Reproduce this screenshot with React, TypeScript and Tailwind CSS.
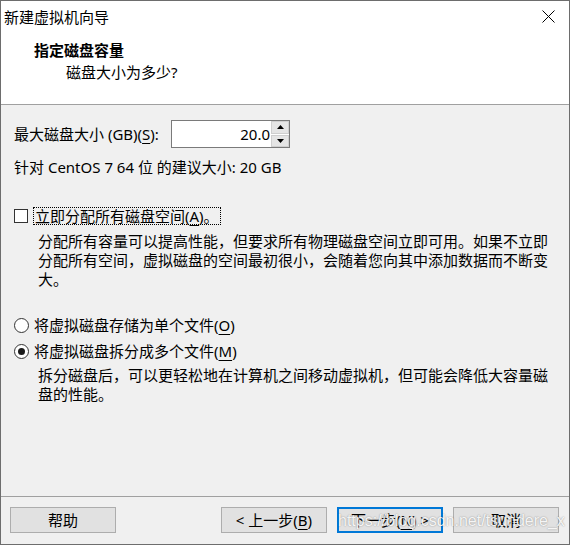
import React from "react";

function U({ children }: { children: React.ReactNode }) {
  return <span className="underline underline-offset-[3px] decoration-1">{children}</span>;
}

function Btn({ children, focused }: { children: React.ReactNode; focused?: boolean }) {
  return (
    <div
      className={
        focused
          ? "w-[106px] h-[26px] border-2 border-[#0078d7] bg-[#e1e1e1] flex items-center justify-center leading-[20px]"
          : "w-[106px] h-[26px] border border-[#adadad] bg-[#e1e1e1] flex items-center justify-center leading-[20px]"
      }
    >
      {children}
    </div>
  );
}

export default function App() {
  return (
    <div className="relative w-[570px] h-[545px] border border-[#6d6d6d] bg-[#f0f0f0] flex flex-col overflow-hidden text-black text-[15px] font-[family-name:'Noto_Sans','Noto_Sans_CJK_SC',sans-serif]">
      {/* header */}
      <div className="h-[104px] shrink-0 bg-white border-b border-[#a0a0a0] flex flex-col">
        <div className="h-[31px] flex items-center justify-between pl-[3px] pr-[14px]">
          <span className="leading-[20px]">新建虚拟机向导</span>
          <svg width="13" height="13" viewBox="0 0 13 13">
            <path d="M0.5 0.5L12.5 12.5M12.5 0.5L0.5 12.5" stroke="#000" strokeWidth="1" fill="none" />
          </svg>
        </div>
        <div className="pt-[8px] pl-[33px] font-bold leading-[20px]">指定磁盘容量</div>
        <div className="mt-[2px] pl-[65px] leading-[20px]">磁盘大小为多少?</div>
      </div>

      {/* body */}
      <div className="flex flex-col pl-[13px]">
        <div className="mt-[15px] h-[28px] flex items-center">
          <span className="w-[157px] leading-[20px] whitespace-nowrap">
            最大磁盘大小 (GB)(<U>S</U>):
          </span>
          <div className="w-[119px] h-[28px] border border-[#7a7a7a] bg-white flex">
            <div className="flex-1 text-right pr-[1px] leading-[26px]">20.0</div>
            <div className="w-[18px] flex flex-col gap-[1px]">
              <div className="flex-1 bg-[#e5e5e5] border border-[#cfcfcf] flex items-center justify-center">
                <svg width="7" height="4" viewBox="0 0 7 4">
                  <path d="M3.5 0L7 4H0z" fill="#000" />
                </svg>
              </div>
              <div className="flex-1 bg-[#e5e5e5] border border-[#cfcfcf] flex items-center justify-center">
                <svg width="7" height="4" viewBox="0 0 7 4">
                  <path d="M0 0H7L3.5 4z" fill="#000" />
                </svg>
              </div>
            </div>
          </div>
        </div>

        <div className="mt-[9px] leading-[20px]">针对 CentOS 7 64 位 的建议大小: 20 GB</div>

        <div className="mt-[30px] h-[18px] flex items-center">
          <div className="w-[14px] h-[14px] border border-[#333333] bg-white" />
          <span className="ml-[5px] border border-dotted border-black px-[1px] leading-[16px]">
            立即分配所有磁盘空间(<U>A</U>)。
          </span>
        </div>

        <div className="mt-[7px] ml-[24px] leading-[19px] whitespace-nowrap">
          分配所有容量可以提高性能，但要求所有物理磁盘空间立即可用。如果不立即
          <br />
          分配所有空间，虚拟磁盘的空间最初很小，会随着您向其中添加数据而不断变
          <br />
          大。
        </div>

        <div className="mt-[26px] h-[20px] flex items-center">
          <div className="w-[15px] h-[15px] rounded-full border border-[#333333] bg-white" />
          <span className="ml-[5px] leading-[20px]">
            将虚拟磁盘存储为单个文件(<U>O</U>)
          </span>
        </div>
        <div className="mt-[6px] h-[20px] flex items-center">
          <div className="w-[15px] h-[15px] rounded-full border border-[#333333] bg-white flex items-center justify-center">
            <div className="w-[7px] h-[7px] rounded-full bg-[#1a1a1a]" />
          </div>
          <span className="ml-[5px] leading-[20px]">
            将虚拟磁盘拆分成多个文件(<U>M</U>)
          </span>
        </div>

        <div className="mt-[5px] ml-[24px] leading-[19px] whitespace-nowrap">
          拆分磁盘后，可以更轻松地在计算机之间移动虚拟机，但可能会降低大容量磁
          <br />
          盘的性能。
        </div>
      </div>

      {/* footer */}
      <div className="mt-auto h-[48px] shrink-0 border-t border-[#a0a0a0] flex items-start pt-[10px] pl-[9px] pr-[10px]">
        <Btn>帮助</Btn>
        <div className="flex-1" />
        <div className="flex gap-[10px]">
          <Btn>
            &lt; 上一步(<U>B</U>)
          </Btn>
          <Btn focused>
            下一步(<U>N</U>) &gt;
          </Btn>
          <Btn>取消</Btn>
        </div>
      </div>

      {/* watermark */}
      <div className="absolute left-[337px] top-[510px] text-[16px] leading-[20px] text-white/90 [text-shadow:0_0_1.5px_rgba(0,0,0,0.45)] font-[family-name:'Liberation_Sans',sans-serif] whitespace-nowrap pointer-events-none">
        https://blog.csdn.net/tsundere_x
      </div>
    </div>
  );
}
